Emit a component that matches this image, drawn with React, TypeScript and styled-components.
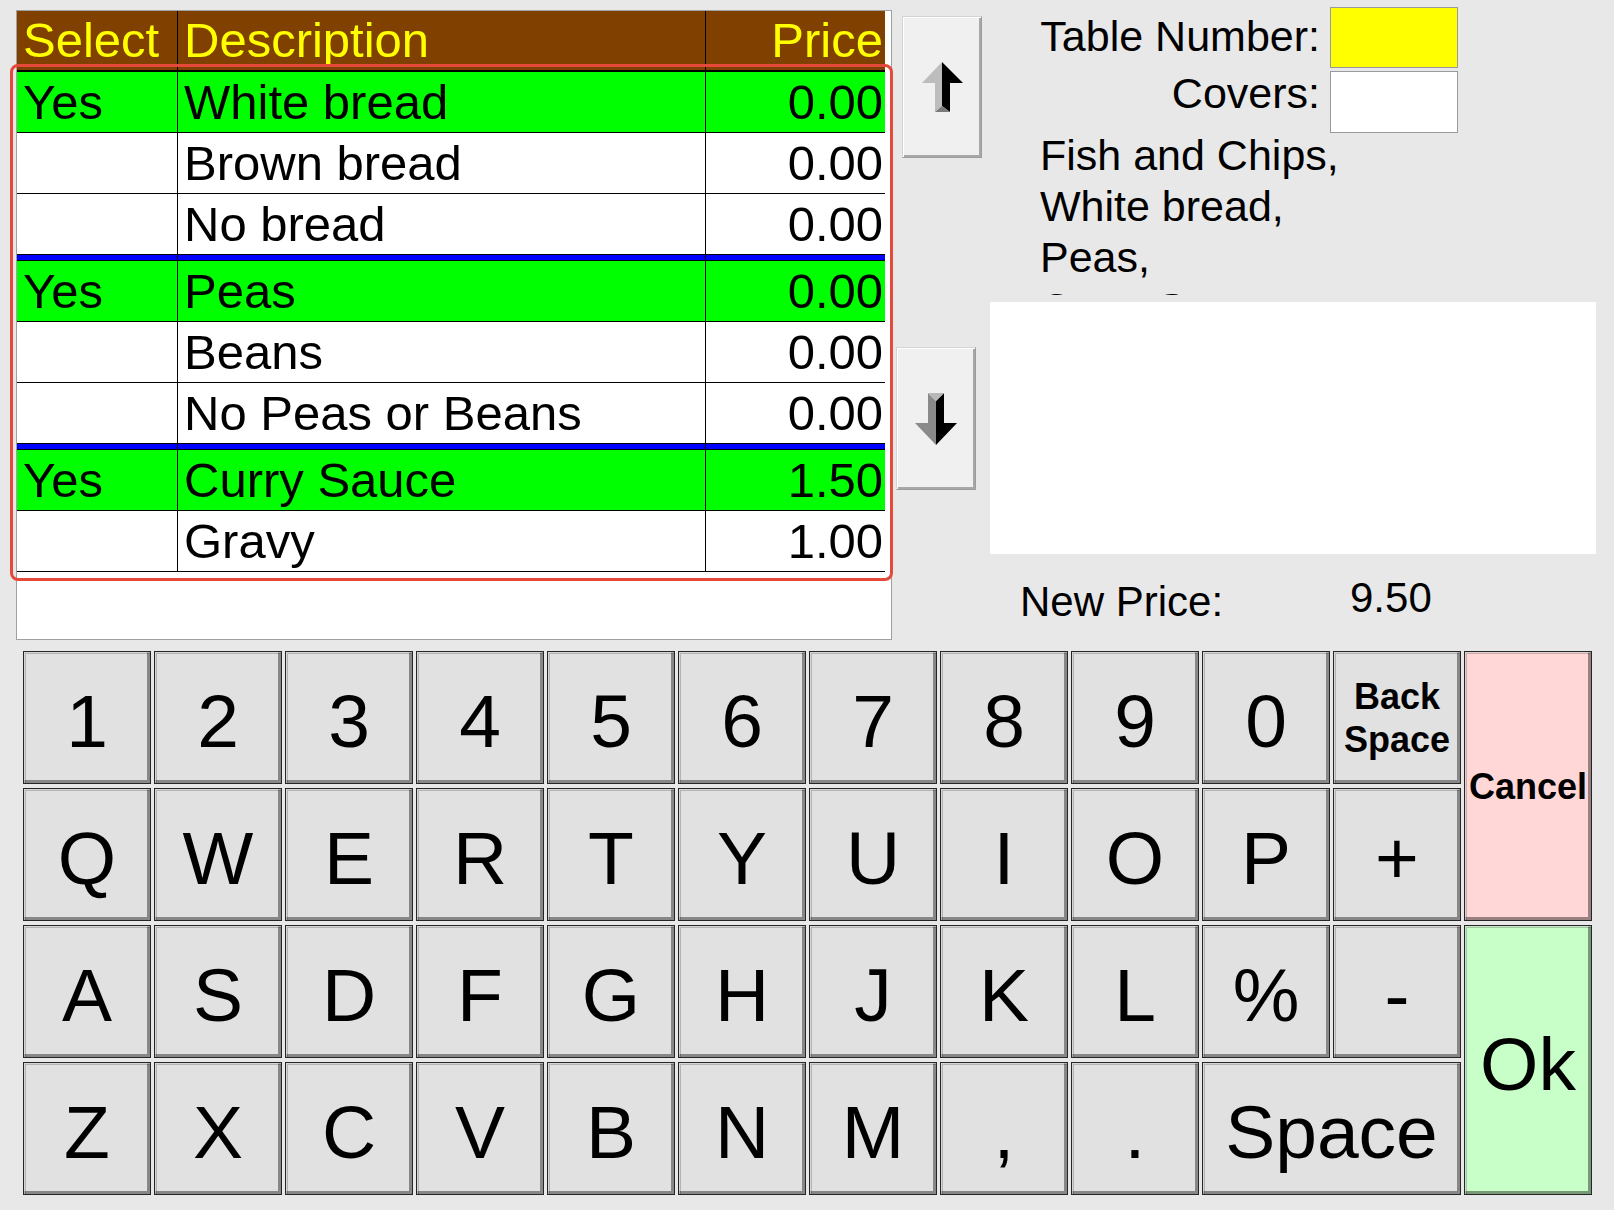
import React from 'react';
import styled, { createGlobalStyle } from 'styled-components';

const GlobalStyle = createGlobalStyle`
  html, body { margin: 0; padding: 0; background: #e8e8e8; }
  body { font-family: "Liberation Sans", Arial, sans-serif; width: 1614px; height: 1210px; overflow: hidden; }
  * { box-sizing: border-box; }
`;

const Screen = styled.div`
  display: flex;
  flex-direction: column;
  width: 1614px;
  height: 1210px;
  background: #e8e8e8;
  font-family: "Liberation Sans", Arial, sans-serif;
  color: #000;
`;

const TopSection = styled.div`
  display: flex;
  align-items: flex-start;
  height: 640px;
`;

/* ---------- options table ---------- */

const TablePanel = styled.div`
  position: relative;
  width: 876px;
  height: 630px;
  margin: 10px 0 0 16px;
  background: #fff;
  border: 1px solid #a0a0a0;
  padding-right: 6px;
`;

const COLS = '161px 528px 1fr';

const TableRow = styled.div<{ $bg: string; $height: number; $line: number }>`
  display: grid;
  grid-template-columns: ${COLS};
  height: ${(p) => p.$height}px;
  background: ${(p) => p.$bg};
  border-bottom: ${(p) => p.$line}px solid #000;
`;

const Cell = styled.div<{ $align?: 'left' | 'right'; $color?: string; $divider?: boolean }>`
  display: flex;
  align-items: center;
  justify-content: ${(p) => (p.$align === 'right' ? 'flex-end' : 'flex-start')};
  padding: ${(p) => (p.$align === 'right' ? '0 2px 0 0' : '0 0 0 6px')};
  border-right: ${(p) => (p.$divider ? '1px solid #000' : 'none')};
  font-size: 49px;
  line-height: 1;
  color: ${(p) => p.$color || '#000'};
  white-space: nowrap;
  overflow: hidden;
`;

const GroupSeparator = styled.div`
  display: grid;
  grid-template-columns: ${COLS};
  height: 6px;
  background: #0000ff;
  border-bottom: 1px solid #000;
`;

const SepCell = styled.div<{ $divider?: boolean }>`
  border-right: ${(p) => (p.$divider ? '1px solid #000' : 'none')};
`;

const FocusRing = styled.div`
  position: absolute;
  left: -7px;
  top: 53px;
  width: 883px;
  height: 517px;
  border: 3px solid #e5493a;
  border-radius: 8px;
  pointer-events: none;
`;

/* ---------- scroll buttons ---------- */

const ScrollColumn = styled.div`
  width: 98px;
  display: flex;
  flex-direction: column;
  align-items: flex-start;
`;

const ScrollButton = styled.button<{ $top: number; $left: number; $height: number }>`
  margin: ${(p) => p.$top}px 0 0 ${(p) => p.$left}px;
  width: 80px;
  height: ${(p) => p.$height}px;
  padding: 0;
  display: flex;
  align-items: center;
  justify-content: center;
  background: #f0f0f0;
  border: 1px solid;
  border-color: #d4d4d4 #9c9c9c #9c9c9c #d4d4d4;
  box-shadow: inset 1px 1px 0 #ffffff, inset -2px -2px 0 #a8a8a8;
`;

/* ---------- info column ---------- */

const InfoColumn = styled.div`
  width: 606px;
  display: flex;
  flex-direction: column;
`;

const FieldGrid = styled.div`
  display: grid;
  grid-template-columns: 280px 128px;
  column-gap: 10px;
  row-gap: 3px;
  margin-top: 7px;
  padding-left: 50px;
`;

const FieldLabel = styled.div<{ $offset: number }>`
  margin-top: ${(p) => p.$offset}px;
  font-size: 43px;
  line-height: 50px;
  text-align: right;
  white-space: nowrap;
`;

const FieldBox = styled.div<{ $fill: string; $height: number }>`
  height: ${(p) => p.$height}px;
  background: ${(p) => p.$fill};
  border: 1px solid #9a9a9a;
`;

const OrderText = styled.div`
  margin-top: -3px;
  height: 165px;
  overflow: hidden;
  padding-left: 50px;
  font-size: 43px;
  line-height: 51px;
  white-space: nowrap;
`;

const NotePad = styled.div`
  margin-top: 7px;
  height: 252px;
  background: #fff;
`;

const PriceRow = styled.div`
  display: flex;
  align-items: flex-start;
  margin-top: 19px;
  padding-left: 30px;
  font-size: 42px;
  line-height: 50px;
`;

const PriceLabel = styled.div`
  width: 330px;
  padding-top: 4px;
`;

const PriceValue = styled.div``;

/* ---------- keyboard ---------- */

const Keyboard = styled.div`
  display: grid;
  grid-template-columns: repeat(12, 128px);
  grid-auto-rows: 133px;
  column-gap: 3px;
  row-gap: 4px;
  margin: 11px 0 0 23px;
`;

const Key = styled.button<{ $face: string; $span?: number; $rows?: number; $bold?: boolean }>`
  grid-column: span ${(p) => p.$span || 1};
  grid-row: span ${(p) => p.$rows || 1};
  display: flex;
  align-items: center;
  justify-content: center;
  margin: 0;
  padding: ${(p) => (p.$bold ? '0' : '8px 0 0 0')};
  background: ${(p) => p.$face};
  border: 1px solid #262626;
  box-shadow: inset 1px 1px 0 rgba(255, 255, 255, 0.45), inset 2px 2px 0 rgba(0, 0, 0, 0.2),
    inset -3px -3px 0 rgba(0, 0, 0, 0.4);
  font-family: "Liberation Sans", Arial, sans-serif;
  font-size: ${(p) => (p.$bold ? '36px' : '75px')};
  font-weight: ${(p) => (p.$bold ? 700 : 400)};
  line-height: ${(p) => (p.$bold ? '43px' : '1')};
  color: #000;
  text-align: center;
  white-space: pre-line;
  overflow: visible;
`;

/* ---------- icons ---------- */

const UpArrow = () => (
  <svg width="44" height="50" viewBox="0 0 44 50">
    <polygon points="22,0 2,21 15,21 15,50 22,44" fill="#bdbdbd" />
    <polygon points="22,0 43,21 30,21 30,50 22,44" fill="#000" />
    <polygon points="15,50 22,44 30,50" fill="#7a7a7a" />
  </svg>
);

const DownArrow = () => (
  <svg width="42" height="52" viewBox="0 0 42 52">
    <polygon points="13,0 21,8 21,52 0,30 13,30" fill="#8a8a8a" />
    <polygon points="29,0 21,8 21,52 42,30 29,30" fill="#000" />
    <polygon points="13,0 29,0 21,8" fill="#b8b8b8" />
  </svg>
);

/* ---------- data ---------- */

type Option = { sel: string; desc: string; price: string; on?: boolean; sepAfter?: boolean };

const options: Option[] = [
  { sel: 'Yes', desc: 'White bread', price: '0.00', on: true },
  { sel: '', desc: 'Brown bread', price: '0.00' },
  { sel: '', desc: 'No bread', price: '0.00', sepAfter: true },
  { sel: 'Yes', desc: 'Peas', price: '0.00', on: true },
  { sel: '', desc: 'Beans', price: '0.00' },
  { sel: '', desc: 'No Peas or Beans', price: '0.00', sepAfter: true },
  { sel: 'Yes', desc: 'Curry Sauce', price: '1.50', on: true },
  { sel: '', desc: 'Gravy', price: '1.00' },
];

type KeyDef = { label: string; face?: string; span?: number; rows?: number; bold?: boolean };

const GRAY = '#e1e1e1';
const keys: KeyDef[] = [
  ...'1234567890'.split('').map((l) => ({ label: l })),
  { label: 'Back\nSpace', bold: true },
  { label: 'Cancel', bold: true, rows: 2, face: '#ffd7d7' },
  ...'QWERTYUIOP'.split('').map((l) => ({ label: l })),
  { label: '+' },
  ...'ASDFGHJKL'.split('').map((l) => ({ label: l })),
  { label: '%' },
  { label: '-' },
  { label: 'Ok', rows: 2, face: '#c8ffc8' },
  ...'ZXCVBNM'.split('').map((l) => ({ label: l })),
  { label: ',' },
  { label: '.' },
  { label: 'Space', span: 2 },
];

export default function App() {
  return (
    <Screen>
      <GlobalStyle />
      <TopSection>
        <TablePanel>
          <TableRow $bg="#804000" $height={61} $line={2}>
            <Cell $divider $color="#ffff00">Select</Cell>
            <Cell $divider $color="#ffff00">Description</Cell>
            <Cell $align="right" $color="#ffff00">Price</Cell>
          </TableRow>
          {options.map((o) => (
            <React.Fragment key={o.desc}>
              <TableRow $bg={o.on ? '#00ff00' : '#ffffff'} $height={61} $line={1}>
                <Cell $divider>{o.sel}</Cell>
                <Cell $divider>{o.desc}</Cell>
                <Cell $align="right">{o.price}</Cell>
              </TableRow>
              {o.sepAfter && (
                <GroupSeparator>
                  <SepCell $divider />
                  <SepCell $divider />
                  <SepCell />
                </GroupSeparator>
              )}
            </React.Fragment>
          ))}
          <FocusRing />
        </TablePanel>

        <ScrollColumn>
          <ScrollButton $top={16} $left={10} $height={142} aria-label="Scroll up">
            <UpArrow />
          </ScrollButton>
          <ScrollButton $top={189} $left={4} $height={143} aria-label="Scroll down">
            <DownArrow />
          </ScrollButton>
        </ScrollColumn>

        <InfoColumn>
          <FieldGrid>
            <FieldLabel $offset={4}>Table Number:</FieldLabel>
            <FieldBox $fill="#ffff00" $height={61} />
            <FieldLabel $offset={-3}>Covers:</FieldLabel>
            <FieldBox $fill="#ffffff" $height={62} />
          </FieldGrid>
          <OrderText>
            <div>Fish and Chips,</div>
            <div>White bread,</div>
            <div>Peas,</div>
            <div>Curry Sauce,</div>
          </OrderText>
          <NotePad />
          <PriceRow>
            <PriceLabel>New Price:</PriceLabel>
            <PriceValue>9.50</PriceValue>
          </PriceRow>
        </InfoColumn>
      </TopSection>

      <Keyboard>
        {keys.map((k, i) => (
          <Key key={i} $face={k.face || GRAY} $span={k.span} $rows={k.rows} $bold={k.bold}>
            {k.label}
          </Key>
        ))}
      </Keyboard>
    </Screen>
  );
}
